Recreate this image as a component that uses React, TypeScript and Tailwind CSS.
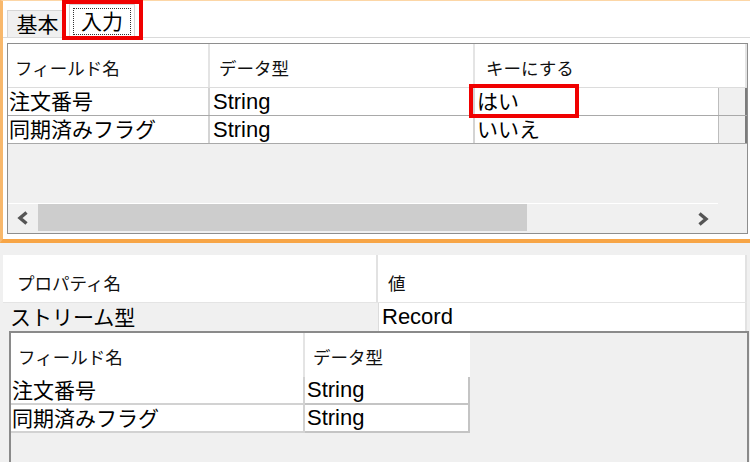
import React from "react";

const FONT = "font-['Liberation_Sans','Noto_Sans_CJK_JP',sans-serif]";

function ChevronLeft() {
  return (
    <svg width="14" height="16" viewBox="0 0 14 16">
      <polyline points="10.5,2.5 4,8 10.5,13.5" fill="none" stroke="#555" strokeWidth="3.4" />
    </svg>
  );
}

function ChevronRight() {
  return (
    <svg width="14" height="16" viewBox="0 0 14 16">
      <polyline points="3.5,2.5 10,8 3.5,13.5" fill="none" stroke="#555" strokeWidth="3.4" />
    </svg>
  );
}

type Row = { name: string; type: string; key?: string };

const inputRows: Row[] = [
  { name: "注文番号", type: "String", key: "はい" },
  { name: "同期済みフラグ", type: "String", key: "いいえ" },
];

function InputGrid() {
  return (
    <div className="h-[191px] border border-[#8e8e8e] flex flex-col bg-[#f0f0f0]">
      {/* header */}
      <div className="h-[44px] flex bg-white border-b border-[#dcdcdc] text-[17.5px] text-[#111]">
        <div className="w-[202px] border-r-2 border-[#e4e4e4] flex items-center pl-[7px] pt-[7px]">フィールド名</div>
        <div className="w-[265px] border-r-2 border-[#e4e4e4] flex items-center pl-[9px] pt-[7px]">データ型</div>
        <div className="flex-1 border-r-2 border-[#e4e4e4] flex items-center pl-[11px] pt-[7px]">キーにする</div>
      </div>
      {inputRows.map((r) => (
        <div key={r.name} className="h-[28px] flex border-b border-[#a9a9a9]">
          <div className="w-[202px] bg-white border-r-2 border-[#d4d4d4] flex items-center pl-[1px] text-[21px] leading-none">{r.name}</div>
          <div className="w-[265px] bg-white border-r-2 border-[#d4d4d4] flex items-center pl-[3px] text-[22px] leading-none">{r.type}</div>
          <div className="w-[243px] bg-white flex items-center pl-[2px] text-[21px] leading-none">{r.key}</div>
          <div className="flex-1 bg-[#f0f0f0] border-l border-[#bdbdbd] border-r-2 border-r-[#7c7c7c]" />
        </div>
      ))}
      <div className="flex-1" />
      <div className="flex">
        <div className="w-[710px] h-px bg-white" />
      </div>
      {/* horizontal scrollbar */}
      <div className="h-[29px] flex items-stretch">
        <div className="w-[30px] flex items-center justify-center pb-[1px]">
          <ChevronLeft />
        </div>
        <div className="w-[489px] bg-[#cdcdcd] mb-[2px]" />
        <div className="w-[191px] flex items-center justify-end pr-[8px]">
          <ChevronRight />
        </div>
        <div className="flex-1" />
      </div>
    </div>
  );
}

const nestedRows = [
  { name: "注文番号", type: "String" },
  { name: "同期済みフラグ", type: "String" },
];

export default function App() {
  return (
    <div className={`w-[750px] h-[462px] overflow-hidden bg-[#f0f0f0] relative text-black ${FONT}`}>
      {/* upper panel: tabbed input fields */}
      <div className="h-[243px] border-l-[3px] border-l-[#f8b86c] border-t border-t-[#fcd6a6] border-b-4 border-b-[#f7a546] flex flex-col bg-[#f0f0f0]">
        <div className="h-[37px] bg-white border-b border-[#dadada] flex items-end pl-[4px]">
          <div className="w-[59px] h-[27px] bg-[#f0f0f0] border border-b-0 border-[#d6d6d6] flex items-center justify-center text-[21px] leading-none pt-[1px] pl-[2px]">
            基本
          </div>
          <div className="w-[66px] h-[34px] ml-[3px] bg-white border border-b-0 border-[#d6d6d6] flex items-center justify-center -mb-px">
            <div className="border border-dotted border-[#333] w-[58px] h-[27px] flex items-center justify-center text-[21px] leading-none">
              入力
            </div>
          </div>
        </div>
        <div className="flex-1 bg-white pt-[5px] pb-[5px] pl-[4px] pr-[2px]">
          <InputGrid />
        </div>
      </div>

      {/* lower panel: properties */}
      <div className="pt-[12px] pl-[3px] pr-[3px]">
        <div className="h-[48px] flex bg-white border-b border-[#e4e4e4] text-[17.5px] text-[#111]">
          <div className="w-[375px] border-r-2 border-[#e2e2e2] flex items-center pl-[14px] pt-[11px]">プロパティ名</div>
          <div className="flex-1 border-r-2 border-[#e2e2e2] flex items-center pl-[10px] pt-[11px]">値</div>
        </div>
        <div className="h-[28px] flex">
          <div className="w-[375px] bg-[#f0f0f0] flex items-center pl-[7px] text-[21px] leading-none">ストリーム型</div>
          <div className="flex-1 bg-white border-l border-[#dcdcdc] border-r-2 border-r-[#e2e2e2] flex items-center pl-[3px] text-[22px] leading-none">
            Record
          </div>
        </div>
        <div className="ml-[6px] -mr-[2px] h-[140px] border-l-2 border-t-2 border-r-2 border-[#8a8a8a] bg-[#f0f0f0] flex flex-col">
          <div className="h-[44px] flex text-[17.5px] text-[#111]">
            <div className="w-[294px] bg-white border-r-2 border-[#e4e4e4] flex items-center pl-[7px] pt-[6px]">フィールド名</div>
            <div className="w-[165px] bg-white flex items-center pl-[8px] pt-[6px]">データ型</div>
          </div>
          {nestedRows.map((r) => (
            <div key={r.name} className="h-[28px] flex">
              <div className="w-[294px] bg-white border-r-2 border-b-2 border-[#d2d2d2] flex items-center pl-[1px] text-[21px] leading-none">
                {r.name}
              </div>
              <div className="w-[165px] bg-white border-r-2 border-b-2 border-[#c4c4c4] flex items-center pl-[2px] text-[22px] leading-none">
                {r.type}
              </div>
            </div>
          ))}
        </div>
      </div>

      {/* highlight annotations */}
      <div className="absolute left-[62px] top-0 w-[81px] h-[40px] border-4 border-[#f00000]" />
      <div className="absolute left-[469px] top-[84px] w-[110px] h-[34px] border-4 border-[#f00000]" />
    </div>
  );
}
